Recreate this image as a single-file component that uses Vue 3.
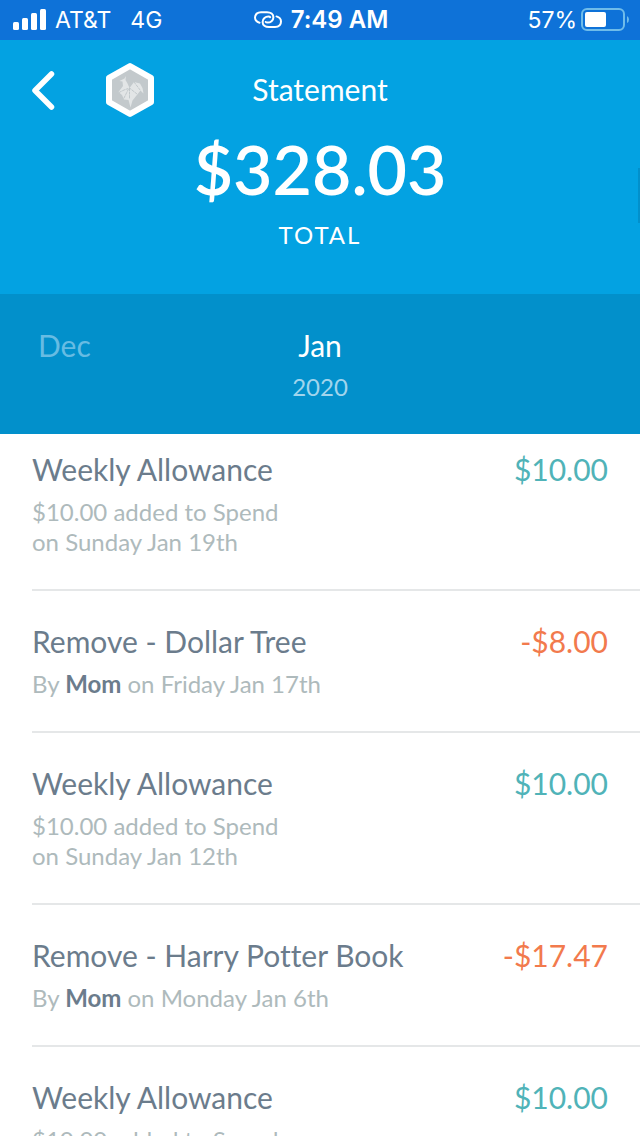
<script setup>
const entries = [
  { title: 'Weekly Allowance', lines: ['$10.00 added to Spend', 'on Sunday Jan 19th'], amount: '$10.00' },
  { title: 'Remove - Dollar Tree', by: 'Mom', when: 'on Friday Jan 17th', amount: '-$8.00' },
  { title: 'Weekly Allowance', lines: ['$10.00 added to Spend', 'on Sunday Jan 12th'], amount: '$10.00' },
  { title: 'Remove - Harry Potter Book', by: 'Mom', when: 'on Monday Jan 6th', amount: '-$17.47' },
  { title: 'Weekly Allowance', lines: ['$10.00 added to Spend'], amount: '$10.00' },
]
</script>

<template>
  <div class="screen">
    <div class="status">
      <div class="carrier">
        <svg class="signal" width="34" height="22" viewBox="0 0 34 22" aria-hidden="true">
          <rect x="0" y="13" width="6" height="8" rx="1.5" />
          <rect x="9" y="9" width="6" height="12" rx="1.5" />
          <rect x="18" y="4" width="6" height="17" rx="1.5" />
          <rect x="27" y="0" width="6" height="21" rx="1.5" />
        </svg>
        <span>AT&amp;T</span>
        <span class="network">4G</span>
      </div>
      <div class="clock">
        <svg width="28" height="18" viewBox="0 0 28 18" fill="none" stroke="#fff" stroke-width="2" stroke-linecap="round" aria-hidden="true">
          <path d="M5.500 11.700 C2.800 11 1 9.200 1 6.600 C1 3.200 3.500 1.200 7 1.200 H13 C16.800 1.200 19.400 3.200 19.400 6.300 C19.400 9.600 16.500 11.600 13.600 11.600 C12.700 11.600 12 11.400 11.800 11" />
          <path d="M22.500 5.400 C25.200 6.200 27 8 27 10.600 C27 14 24.500 16 21 16 H15 C11.200 16 8.600 14 8.600 10.900 C8.600 7.600 11.500 5.600 14.400 5.600 C15.300 5.600 16 5.800 16.200 6.200" />
        </svg>
        <span>7:49 AM</span>
      </div>
      <div class="power">
        <span>57%</span>
        <svg width="48" height="24" viewBox="0 0 48 24" aria-hidden="true">
          <rect x="1" y="1" width="42" height="21" rx="5" fill="none" stroke="#6fbcea" stroke-width="2" />
          <rect x="4" y="4" width="21" height="15" rx="2" fill="#fff" />
          <path d="M46 8 Q48 9 48 11.500 Q48 14 46 15 Z" fill="#6fbcea" />
        </svg>
      </div>
    </div>

    <header class="summary">
      <div class="bar">
        <div class="left">
          <button class="back" type="button" aria-label="Back">
            <svg width="24" height="40" viewBox="0 0 24 40" fill="none" stroke="#fff" stroke-width="5.5" stroke-linecap="round" stroke-linejoin="round">
              <path d="M19.500 4 L3 20.500 L19.500 37" />
            </svg>
          </button>
          <svg class="badge" width="50" height="56" viewBox="0 0 50 56" aria-hidden="true">
            <path d="M25 4 L46 15.800 V40.200 L25 52 L4 40.200 V15.800 Z" fill="#c3c9cc" stroke="#fff" stroke-width="6" stroke-linejoin="round" />
            <path d="M21 14 L19.500 16.500 L14.500 19 L17.500 19.500 L18 24 L13.500 30 L17 33 L19 37.500 L23.500 38 L25.500 45.500 L27.500 38.500 L35.500 28.500 L38.500 31.500 L37.500 26 L35 21.500 L29 20 L24.500 26 L22.500 21.500 L20.500 18 Z" fill="#e2e5e6" />
            <path d="M14 30.500 L19 28 L24.500 26 L32 32 M23.500 27 L18.500 37 M24.500 26 V37 M29 20 L35.500 28.500" fill="none" stroke="#bdc4c7" stroke-width="0.9" stroke-dasharray="3 0.6" />
          </svg>
        </div>
        <h1>Statement</h1>
      </div>
      <div class="total">$328.03</div>
      <div class="caption">TOTAL</div>
      <span class="thumb"></span>
    </header>

    <nav class="months" aria-label="Month">
      <button class="previous" type="button">Dec</button>
      <button class="current" type="button" aria-current="date">
        <span>Jan</span>
        <span class="year">2020</span>
      </button>
    </nav>

    <ul class="entries">
      <li v-for="(entry, i) in entries" :key="i">
        <div class="details">
          <h2>{{ entry.title }}</h2>
          <p v-if="entry.by">By <strong>{{ entry.by }}</strong> {{ entry.when }}</p>
          <p v-for="line in entry.lines" :key="line">{{ line }}</p>
        </div>
        <span class="amount" :class="{ negative: entry.amount.startsWith('-') }">{{ entry.amount }}</span>
      </li>
    </ul>
  </div>
</template>

<style>
body {
  margin: 0;
}
</style>

<style scoped>
.screen {
  display: flex;
  flex-direction: column;
  height: 100vh;
  background: #fff;
  font-family: Lato, "Liberation Sans", sans-serif;
  font-variant-ligatures: none;
  color: #fff;
}
h1, h2, p, ul {
  margin: 0;
  padding: 0;
  font-weight: 400;
}
button {
  border: 0;
  padding: 0;
  background: none;
  color: inherit;
  font: inherit;
  cursor: pointer;
}
svg {
  display: block;
}
.status {
  flex: none;
  display: grid;
  grid-template-columns: 1fr auto 1fr;
  align-items: center;
  height: 40px;
  padding: 0 11px 0 13px;
  background: #0e72d8;
  font-family: Inter, "Liberation Sans", sans-serif;
  font-size: 23px;
  line-height: 40px;
}
.carrier, .clock, .power {
  display: flex;
  align-items: center;
}
.carrier {
  gap: 8px;
}
.signal {
  fill: #fff;
}
.network {
  margin-left: 11px;
}
.clock {
  gap: 9px;
  font-size: 24px;
  font-weight: 600;
}
.power {
  justify-content: flex-end;
  gap: 4px;
}
.summary {
  flex: none;
  position: relative;
  height: 254px;
  background: #03a2e2;
  text-align: center;
}
.bar {
  display: grid;
  grid-template-columns: 1fr auto 1fr;
  align-items: center;
  height: 100px;
  padding: 0 32px;
}
.left {
  display: flex;
  align-items: center;
  gap: 49px;
}
h1 {
  padding-bottom: 3px;
  font-size: 30px;
  line-height: 36px;
}
.total {
  font-size: 68px;
  font-weight: 600;
  line-height: 58px;
}
.caption {
  margin-top: 22px;
  font-size: 24px;
  line-height: 30px;
  letter-spacing: 2px;
}
.thumb {
  position: absolute;
  right: 0;
  top: 128px;
  width: 2px;
  height: 55px;
  background: #0290cb;
}
.months {
  flex: none;
  display: grid;
  grid-template-columns: 1fr auto 1fr;
  align-items: start;
  height: 109px;
  padding: 31px 38px 0;
  background: #0290cb;
  font-size: 30px;
  line-height: 40px;
}
.previous {
  justify-self: start;
  color: #67bce3;
}
.current {
  display: flex;
  flex-direction: column;
  align-items: center;
}
.year {
  font-size: 24px;
  line-height: 44px;
  color: #a1d5ed;
}
.entries {
  flex: 1;
  min-height: 0;
  overflow-y: auto;
  scrollbar-width: none;
  padding-left: 32px;
  list-style: none;
}
.entries li {
  display: flex;
  justify-content: space-between;
  padding: 32px 32px 32px 0;
  border-bottom: 2px solid #e5e7e8;
}
.entries li:first-child {
  padding-top: 17px;
}
h2, .amount {
  font-size: 30px;
  line-height: 36px;
}
h2 {
  margin-bottom: 10px;
  color: #6b7c8c;
}
p {
  font-size: 24px;
  line-height: 30px;
  color: #aebabc;
}
strong {
  font-weight: 700;
  color: #6b7c8c;
}
.amount {
  color: #50b3b8;
}
.negative {
  color: #f27a4d;
}
</style>
